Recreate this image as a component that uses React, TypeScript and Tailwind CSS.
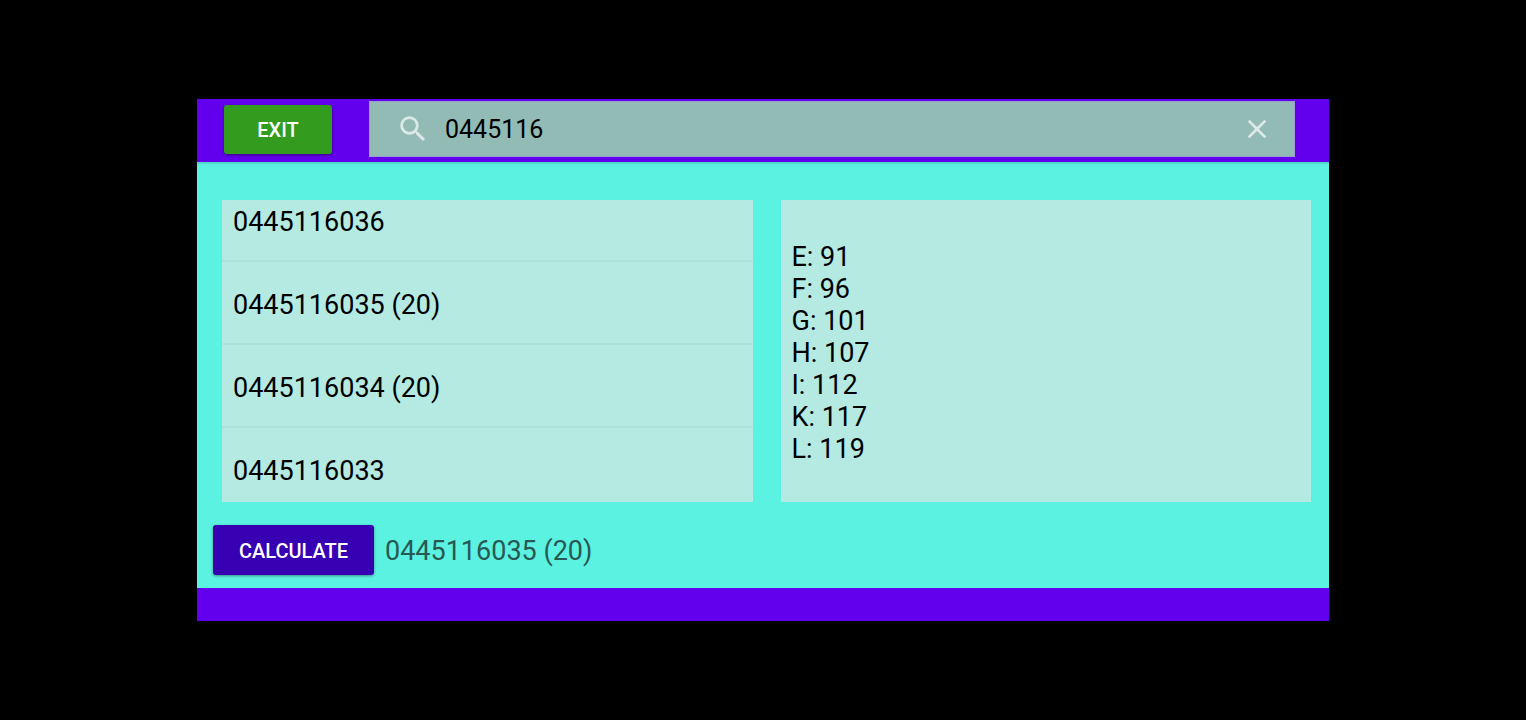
import { useState } from "react";
import { MdClose, MdSearch } from "react-icons/md";

const parts = ["0445116036", "0445116035 (20)", "0445116034 (20)", "0445116033"];

const results = ["E: 91", "F: 96", "G: 101", "H: 107", "I: 112", "K: 117", "L: 119"];

export default function App() {
  const [query, setQuery] = useState("0445116");
  const [selected, setSelected] = useState(parts[1]);

  return (
    <div className="flex min-h-screen flex-col justify-center bg-black px-[197px] font-[Roboto,sans-serif] text-black">
      <header className="z-10 flex items-center bg-[#6200ee] pt-0.5 pr-[34px] pb-[5px] pl-[27px] shadow-[0_1px_3px_rgba(0,0,0,0.2)]">
        <button
          type="button"
          className="h-[49px] w-[108px] shrink-0 rounded-[3px] bg-[#339c1e] pt-0.5 text-xl font-medium text-white shadow-[0_1px_3px_rgba(0,0,0,0.5)]"
        >
          EXIT
        </button>
        <div className="ml-[37px] flex h-14 flex-1 items-center border border-[#9a9fd2] bg-[#92bbb5] pr-[21px] pl-[26px]">
          <MdSearch className="size-[34px] shrink-0 text-[#dce9e7]" aria-hidden="true" />
          <input
            type="text"
            aria-label="Search"
            value={query}
            onChange={(e) => setQuery(e.target.value)}
            className="ml-[15px] h-full min-w-0 flex-1 bg-transparent text-[25px] outline-none"
          />
          <button type="button" aria-label="Clear" onClick={() => setQuery("")}>
            <MdClose className="size-8 text-[#dce9e7]" />
          </button>
        </div>
      </header>

      <main className="bg-[#5cf2e1] pt-[38px] pb-[13px]">
        <div className="grid grid-cols-2 gap-7 pr-[18px] pl-[25px]">
          <div className="h-[302px] overflow-hidden bg-[#b5eae3]">
            <ul className="-mt-[21px]">
              {parts.map((part) => (
                <li key={part} className="h-[83px] border-b-2 border-[#afe0da]">
                  <button
                    type="button"
                    onClick={() => setSelected(part)}
                    className="h-full w-full pt-1.5 pl-[11px] text-left text-[27px]"
                  >
                    {part}
                  </button>
                </li>
              ))}
            </ul>
          </div>
          <div className="flex h-[302px] flex-col justify-center bg-[#b5eae3] pt-1 pl-[11px] text-[27px] leading-8">
            {results.map((line) => (
              <p key={line}>{line}</p>
            ))}
          </div>
        </div>

        <div className="mt-[23px] flex items-center pl-4">
          <button
            type="button"
            className="h-[50px] w-[161px] rounded-[3px] bg-[#3700b3] pt-0.5 text-xl font-medium text-white shadow-[0_1px_3px_rgba(0,0,0,0.4)]"
          >
            CALCULATE
          </button>
          <p className="ml-[11px] pt-0.5 text-[27px] leading-8 text-[#285953]">{selected}</p>
        </div>
      </main>

      <footer className="h-[33px] bg-[#6200ee]" />
    </div>
  );
}
